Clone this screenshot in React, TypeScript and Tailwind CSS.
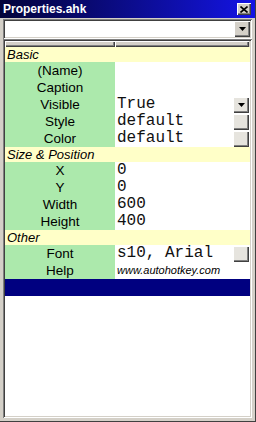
import { ReactNode } from 'react';

const sunken =
  'shadow-[inset_1px_1px_0_#808080,inset_-1px_-1px_0_#ffffff,inset_2px_2px_0_#404040,inset_-2px_-2px_0_#d4d0c8]';
const raised =
  'shadow-[inset_1px_1px_0_#ffffff,inset_-1px_-1px_0_#404040,inset_-2px_-2px_0_#808080]';

interface Prop {
  name: string;
  value?: string;
  button?: 'drop' | 'blank';
  help?: boolean;
}

interface Group {
  title: string;
  items: Prop[];
}

const groups: Group[] = [
  {
    title: 'Basic',
    items: [
      { name: '(Name)' },
      { name: 'Caption' },
      { name: 'Visible', value: 'True', button: 'drop' },
      { name: 'Style', value: 'default', button: 'blank' },
      { name: 'Color', value: 'default', button: 'blank' },
    ],
  },
  {
    title: 'Size & Position',
    items: [
      { name: 'X', value: '0' },
      { name: 'Y', value: '0' },
      { name: 'Width', value: '600' },
      { name: 'Height', value: '400' },
    ],
  },
  {
    title: 'Other',
    items: [
      { name: 'Font', value: 's10, Arial', button: 'blank' },
      { name: 'Help', value: 'www.autohotkey.com', help: true },
    ],
  },
];

function DownArrow() {
  return (
    <svg width="7" height="4" viewBox="0 0 7 4">
      <path d="M0 0h7L3.5 4z" fill="#000" />
    </svg>
  );
}

function SmallButton({ children }: { children?: ReactNode }) {
  return (
    <div className={`w-[16px] h-[16px] mr-[1px] bg-[#e6e4de] flex items-center justify-center ${raised}`}>
      {children}
    </div>
  );
}

function Row({ p }: { p: Prop }) {
  return (
    <div className="flex h-[17px]">
      <div className="w-[110px] bg-[#ace9ac] text-center text-[13.5px] leading-[17px] text-black">{p.name}</div>
      <div className="flex-1 flex items-center bg-white">
        {p.help ? (
          <span className="pl-[2px] flex-1 italic text-[11px] leading-[17px] text-black">{p.value}</span>
        ) : (
          <span className="pl-[2px] flex-1 font-['Liberation_Mono',monospace] text-[16px] leading-[17px] text-[#111]">
            {p.value}
          </span>
        )}
        {p.button && <SmallButton>{p.button === 'drop' && <DownArrow />}</SmallButton>}
      </div>
    </div>
  );
}

export default function App() {
  return (
    <div className="w-[256px] h-[422px] bg-[#d4d0c8] flex flex-col border-r border-b border-[#404040] font-['Liberation_Sans',Arial,sans-serif] overflow-hidden">
      <div className="h-[18px] flex items-center justify-between pl-[3px] pr-[4px] bg-gradient-to-r from-[#04043a] to-[#1414e6]">
        <span className="text-white font-bold text-[12px] leading-none">Properties.ahk</span>
        <div className={`w-[14px] h-[12px] bg-[#d4d0c8] flex items-center justify-center ${raised}`}>
          <svg width="8" height="7" viewBox="0 0 8 7">
            <path d="M0.5 0.5l7 6M7.5 0.5l-7 6" stroke="#000" strokeWidth="1.6" />
          </svg>
        </div>
      </div>

      <div className="flex-1 flex flex-col pl-[3px] pr-[3px] pb-[3px] pt-[1px]">
        <div className={`h-[20px] bg-white flex items-center justify-end pr-[2px] ${sunken}`}>
          <div className={`w-[16px] h-[16px] bg-[#d4d0c8] flex items-center justify-center ${raised}`}>
            <DownArrow />
          </div>
        </div>

        <div className={`flex-1 bg-white flex flex-col p-[2px] ${sunken}`}>
          <div className="h-[6px] flex bg-[#d4d0c8]">
            <div className={`w-[110px] ${raised}`} />
            <div className={`w-[134px] ${raised}`} />
          </div>
          {groups.map((g) => (
            <div key={g.title} className="flex flex-col">
              <div className="h-[15px] bg-[#ffffc8] pl-[2px] italic text-[13px] leading-[15px] text-black">{g.title}</div>
              {g.items.map((p) => (
                <Row key={p.name} p={p} />
              ))}
            </div>
          ))}
          <div className="h-[17px] bg-[#000080]" />
        </div>
      </div>
    </div>
  );
}
